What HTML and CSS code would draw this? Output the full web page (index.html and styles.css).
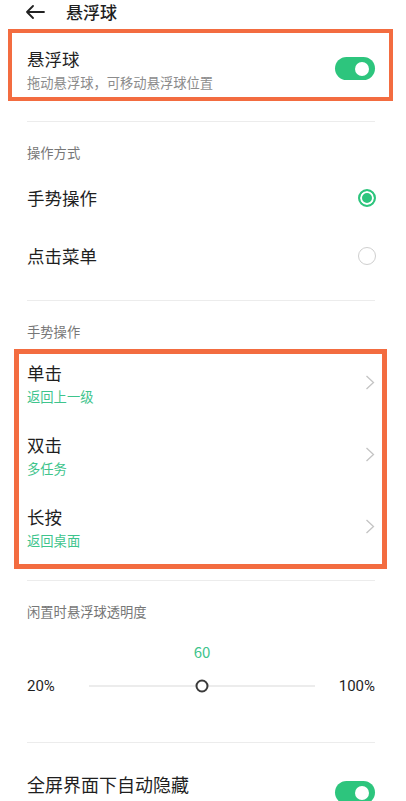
FILE: index.html
```html
<!DOCTYPE html>
<html lang="zh-CN">
<head>
  <meta charset="UTF-8">
  <title>悬浮球</title>
  <meta name="viewport" content="width=device-width, initial-scale=1.0">
  <link rel="stylesheet" href="styles.css">
</head>
<body>
  <div class="topbar">
    <svg class="back" width="20" height="14" viewBox="0 0 20 14">
      <path d="M19 7H2M8 1L2 7l6 6" fill="none" stroke="#222" stroke-width="1.8" stroke-linecap="round" stroke-linejoin="round"/>
    </svg>
    <div class="title">悬浮球</div>
  </div>

  <!-- main switch -->
  <div class="box box-main">
    <div class="text">
      <div class="row-title">悬浮球</div>
      <div class="row-sub">拖动悬浮球，可移动悬浮球位置</div>
    </div>
    <div class="switch on"></div>
  </div>

  <div class="divider first"></div>

  <!-- mode -->
  <div class="label">操作方式</div>
  <div class="radio-row">
    <span class="row-title">手势操作</span>
    <span class="radio checked"></span>
  </div>
  <div class="radio-row">
    <span class="row-title">点击菜单</span>
    <span class="radio"></span>
  </div>

  <div class="divider mode-end"></div>

  <!-- gestures -->
  <div class="label">手势操作</div>
  <div class="box box-gestures">
    <div class="gesture">
      <div class="text">
        <div class="row-title">单击</div>
        <div class="row-sub green">返回上一级</div>
      </div>
      <svg class="chevron" width="10" height="15" viewBox="0 0 10 15"><path d="M1.5 1l7 6.5-7 6.5" fill="none" stroke="#c4c4c4" stroke-width="1.3"/></svg>
    </div>
    <div class="gesture">
      <div class="text">
        <div class="row-title">双击</div>
        <div class="row-sub green">多任务</div>
      </div>
      <svg class="chevron" width="10" height="15" viewBox="0 0 10 15"><path d="M1.5 1l7 6.5-7 6.5" fill="none" stroke="#c4c4c4" stroke-width="1.3"/></svg>
    </div>
    <div class="gesture">
      <div class="text">
        <div class="row-title">长按</div>
        <div class="row-sub green">返回桌面</div>
      </div>
      <svg class="chevron" width="10" height="15" viewBox="0 0 10 15"><path d="M1.5 1l7 6.5-7 6.5" fill="none" stroke="#c4c4c4" stroke-width="1.3"/></svg>
    </div>
  </div>

  <div class="divider gestures-end"></div>

  <!-- opacity -->
  <div class="label">闲置时悬浮球透明度</div>
  <div class="slider">
    <div></div>
    <div class="value">60</div>
    <div></div>
    <div class="end">20%</div>
    <div class="track"><span class="thumb" style="left: 50%"></span></div>
    <div class="end right">100%</div>
  </div>

  <div class="divider slider-end"></div>

  <div class="last-row">
    <span class="row-title big">全屏界面下自动隐藏</span>
    <div class="switch on"></div>
  </div>
</body>
</html>
```

FILE: styles.css
```css
* { box-sizing: border-box; }

body {
  margin: 0;
  background: #fff;
  color: #1f1f1f;
  font-family: "Noto Sans CJK SC", "Noto Sans", sans-serif;
  overflow: hidden;
  height: 801px;
}

.topbar {
  height: 23px;
  display: flex;
  align-items: center;
  padding-left: 25px;
}

.back {
  display: block;
}

.title {
  margin-left: 21px;
  font-size: 17px;
  font-weight: 500;
  line-height: 23px;
}

.box {
  border: 4px solid #f36c40;
}

.box-main {
  margin: 6px 13px 0 8px;
  height: 72px;
  display: flex;
  align-items: flex-start;
  justify-content: space-between;
  padding: 0 14px 0 15px;
}

.box-main .text {
  padding-top: 13px;
}

.box-main .switch {
  margin-top: 24px;
}

.row-title {
  font-size: 17.5px;
  line-height: 26px;
  color: #1f1f1f;
}

.row-title.big {
  font-size: 18px;
}

.row-sub {
  font-size: 13.3px;
  line-height: 22px;
  color: #8c8c8c;
}

.row-sub.green {
  color: #3ec48c;
}

.switch {
  width: 40px;
  height: 23px;
  border-radius: 12px;
  background: #d9d9d9;
  position: relative;
  flex-shrink: 0;
}

.switch.on {
  background: #2dc57d;
}

.switch::after {
  content: "";
  position: absolute;
  top: 4.5px;
  left: 6px;
  width: 14px;
  height: 14px;
  border-radius: 50%;
  background: #fff;
}

.switch.on::after {
  left: auto;
  right: 6px;
}

.divider {
  height: 1px;
  background: #ececec;
  margin: 0 31px 0 27px;
}

.divider.first { margin-top: 20px; }
.divider.mode-end { margin-top: 15px; }
.divider.gestures-end { margin-top: 11px; }
.divider.slider-end { margin-top: 44px; }

.label {
  padding: 21px 0 0 27px;
  font-size: 13.3px;
  line-height: 20px;
  color: #777;
}

.radio-row {
  height: 58px;
  display: flex;
  align-items: center;
  justify-content: space-between;
  padding: 0 30px 0 27px;
}

.label + .radio-row { margin-top: 6px; }

.radio {
  width: 18px;
  height: 18px;
  border-radius: 50%;
  border: 1.5px solid #cfcfcf;
}

.radio.checked {
  border: 2px solid #2dc57d;
  background: #2dc57d;
  box-shadow: inset 0 0 0 2px #fff;
}

.box-gestures {
  margin: 7px 19px 0 14px;
  height: 220px;
  border-width: 5px;
  display: grid;
  grid-template-rows: 72px 72px 1fr;
  padding: 0 7px 0 8px;
}

.gesture {
  display: flex;
  justify-content: space-between;
  align-items: flex-start;
}

.gesture .text {
  padding-top: 6px;
}

.chevron {
  display: block;
  margin-top: 21px;
}

.slider {
  display: grid;
  grid-template-columns: 62px 1fr 60px;
  grid-template-rows: 20px 24px;
  row-gap: 12px;
  margin: 20px 31px 0 27px;
  align-items: center;
}

.value {
  text-align: center;
  font-size: 15px;
  color: #3ec48c;
  line-height: 20px;
}

.end {
  font-size: 15px;
  color: #1f1f1f;
  font-family: "Roboto", "Noto Sans", sans-serif;
}

.end.right {
  text-align: right;
}

.track {
  position: relative;
  height: 2px;
  background: #ececec;
}

.thumb {
  position: absolute;
  top: 50%;
  width: 13px;
  height: 13px;
  border-radius: 50%;
  border: 2.2px solid #3a3a3a;
  background: #fff;
  transform: translate(-50%, -50%);
}

.last-row {
  margin-top: 29px;
  display: flex;
  justify-content: space-between;
  align-items: flex-start;
  padding: 0 31px 0 27px;
}

.last-row .row-title {
  line-height: 24px;
}

.last-row .switch {
  margin-top: 9px;
}
```
